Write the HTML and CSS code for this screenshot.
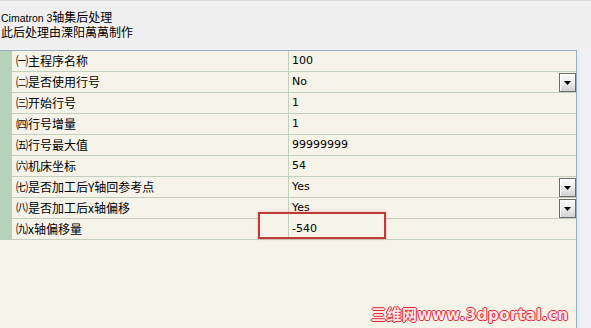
FILE: index.html
```html
<!DOCTYPE html>
<html>
<head>
<meta charset="utf-8">
<link rel="stylesheet" href="styles.css">
</head>
<body>
<div class="app">
  <header class="title">
    <div><span class="lat">Cimatron 3</span>轴集后处理</div>
    <div>此后处理由溧阳萬萬制作</div>
  </header>
  <div class="main">
    <div class="grid">
      <div class="row"><div class="gut"></div><div class="name">㈠主程序名称</div><div class="val"><span>100</span></div></div>
      <div class="row"><div class="gut"></div><div class="name">㈡是否使用行号</div><div class="val"><span>No</span><span class="dd"></span></div></div>
      <div class="row"><div class="gut"></div><div class="name">㈢开始行号</div><div class="val"><span>1</span></div></div>
      <div class="row"><div class="gut"></div><div class="name">㈣行号增量</div><div class="val"><span>1</span></div></div>
      <div class="row"><div class="gut"></div><div class="name">㈤行号最大值</div><div class="val"><span>99999999</span></div></div>
      <div class="row"><div class="gut"></div><div class="name">㈥机床坐标</div><div class="val"><span>54</span></div></div>
      <div class="row"><div class="gut"></div><div class="name">㈦是否加工后Y轴回参考点</div><div class="val"><span>Yes</span><span class="dd"></span></div></div>
      <div class="row"><div class="gut"></div><div class="name">㈧是否加工后x轴偏移</div><div class="val"><span>Yes</span><span class="dd"></span></div></div>
      <div class="row"><div class="gut"></div><div class="name">㈨x轴偏移量</div><div class="val"><span class="top">-540</span></div></div>
    </div>
    <div class="side"></div>
  </div>
  <div class="mark"></div>
  <div class="wm">三维网www.3dportal.cn</div>
</div>
</body>
</html>
```

FILE: styles.css
```css
html, body {
  margin: 0;
  padding: 0;
}
body {
  background: #f0f0f0;
}
.app {
  position: relative;
  width: 591px;
  height: 328px;
  overflow: hidden;
  background: #f0f0f0;
}
.title {
  height: 50px;
  box-sizing: border-box;
  padding: 9px 0 0 1px;
  font-family: "Noto Sans CJK SC", sans-serif;
  font-size: 12px;
  line-height: 14px;
  color: #000;
  border-top: 1px solid #dcdcdc;
}
.title .lat {
  font-family: "Liberation Sans", sans-serif;
  font-size: 10.5px;
}
.main {
  display: flex;
  height: 278px;
}
.grid {
  width: 577px;
  box-sizing: border-box;
  background: #f6f3e9;
  border-top: 1px solid #9aabc4;
  border-right: 1px solid #9aabc4;
}
.side {
  flex: 1;
  background: #eff1f4;
  border-left: 3px solid #e5edf8;
}
.row {
  display: grid;
  grid-template-columns: 12px 277px 1fr;
  height: 21px;
}
.gut {
  background: #b8d3ba;
}
.name {
  box-sizing: border-box;
  border-bottom: 1px solid #c3d0be;
  border-right: 1px solid #c3d0be;
  padding-left: 4px;
  font-family: "Noto Sans CJK SC", sans-serif;
  font-size: 12px;
  line-height: 20px;
  color: #000;
  white-space: nowrap;
}
.val {
  box-sizing: border-box;
  border-bottom: 1px solid #c3d0be;
  padding-left: 3px;
  display: flex;
  justify-content: space-between;
  align-items: flex-start;
  font-family: "DejaVu Sans", sans-serif;
  font-size: 11px;
  line-height: 20px;
  color: #000;
}
.val .top {
  position: relative;
  z-index: 2;
}
.dd {
  position: relative;
  width: 17px;
  height: 19px;
  box-sizing: border-box;
  margin-top: 1px;
  border: 1px solid #6b6b6b;
  background: linear-gradient(#fbfbfb, #eeeeee 45%, #d2d2d2);
  box-shadow: inset 1px 1px 0 #ffffff;
}
.dd::after {
  content: "";
  position: absolute;
  left: 4px;
  top: 7px;
  width: 7px;
  height: 4px;
  background: #000;
  clip-path: polygon(0 0, 100% 0, 50% 100%);
}
.mark {
  position: absolute;
  left: 258px;
  top: 212px;
  width: 128px;
  height: 27px;
  box-sizing: border-box;
  border: 2px solid #c03a3c;
  box-shadow: 0 0 2px rgba(240, 120, 120, 0.6);
  background: linear-gradient(to right, #f6f3e9 0, #f6f3e9 28px, #c3d0be 28px, #c3d0be 29px, #f6f3e9 29px);
  z-index: 1;
}
.wm {
  position: absolute;
  left: 371px;
  top: 306px;
  font-family: "DejaVu Sans", "Noto Sans CJK SC", sans-serif;
  font-weight: bold;
  font-size: 15px;
  line-height: 18px;
  letter-spacing: 0.5px;
  color: #fde4e6;
  text-shadow: 1px 0 0 #e02a3c, -1px 0 0 #e02a3c, 0 1px 0 #e02a3c, 0 -1px 0 #e02a3c, 0 0 2px rgba(230, 60, 80, 0.6);
  white-space: nowrap;
}
```
